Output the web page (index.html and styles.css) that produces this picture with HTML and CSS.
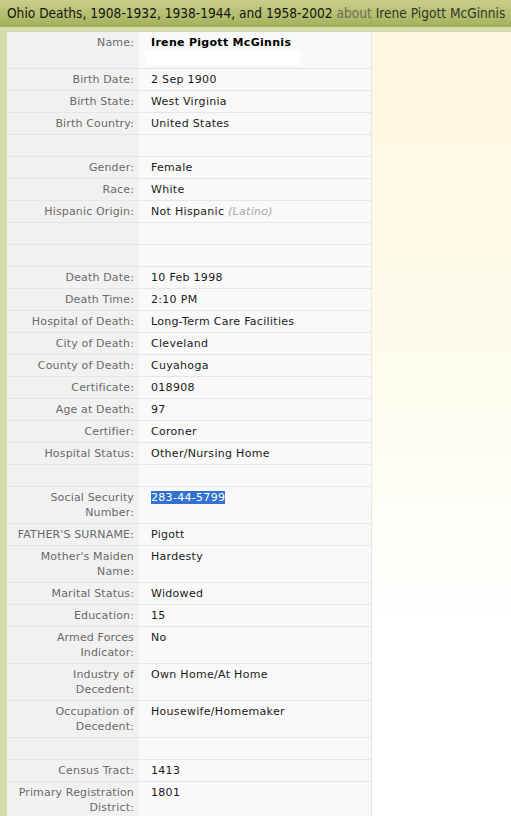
FILE: index.html
```html
<!DOCTYPE html>
<html>
<head>
<meta charset="utf-8">
<link rel="stylesheet" href="styles.css">
</head>
<body>
<div class="page">
  <h1 class="title">Ohio Deaths, 1908-1932, 1938-1944, and 1958-2002 <span class="about">about</span> <span class="who">Irene Pigott McGinnis</span></h1>
  <div class="frame">
    <div class="content">
      <div class="record">
        <div class="row name-row"><div class="lbl">Name:</div><div class="val"><b>Irene Pigott McGinnis</b><div class="blank"></div></div></div>
        <div class="row"><div class="lbl">Birth Date:</div><div class="val">2 Sep 1900</div></div>
        <div class="row"><div class="lbl">Birth State:</div><div class="val">West Virginia</div></div>
        <div class="row"><div class="lbl">Birth Country:</div><div class="val">United States</div></div>
        <div class="row"><div class="lbl">&nbsp;</div><div class="val">&nbsp;</div></div>
        <div class="row"><div class="lbl">Gender:</div><div class="val">Female</div></div>
        <div class="row"><div class="lbl">Race:</div><div class="val">White</div></div>
        <div class="row"><div class="lbl">Hispanic Origin:</div><div class="val">Not Hispanic <i class="note">(Latino)</i></div></div>
        <div class="row"><div class="lbl">&nbsp;</div><div class="val">&nbsp;</div></div>
        <div class="row"><div class="lbl">&nbsp;</div><div class="val">&nbsp;</div></div>
        <div class="row"><div class="lbl">Death Date:</div><div class="val">10 Feb 1998</div></div>
        <div class="row"><div class="lbl">Death Time:</div><div class="val">2:10 PM</div></div>
        <div class="row"><div class="lbl">Hospital of Death:</div><div class="val">Long-Term Care Facilities</div></div>
        <div class="row"><div class="lbl">City of Death:</div><div class="val">Cleveland</div></div>
        <div class="row"><div class="lbl">County of Death:</div><div class="val">Cuyahoga</div></div>
        <div class="row"><div class="lbl">Certificate:</div><div class="val">018908</div></div>
        <div class="row"><div class="lbl">Age at Death:</div><div class="val">97</div></div>
        <div class="row"><div class="lbl">Certifier:</div><div class="val">Coroner</div></div>
        <div class="row"><div class="lbl">Hospital Status:</div><div class="val">Other/Nursing Home</div></div>
        <div class="row"><div class="lbl">&nbsp;</div><div class="val">&nbsp;</div></div>
        <div class="row"><div class="lbl">Social Security<br>Number:</div><div class="val"><span class="sel">283-44-5799</span></div></div>
        <div class="row"><div class="lbl">FATHER'S SURNAME:</div><div class="val">Pigott</div></div>
        <div class="row"><div class="lbl">Mother's Maiden<br>Name:</div><div class="val">Hardesty</div></div>
        <div class="row"><div class="lbl">Marital Status:</div><div class="val">Widowed</div></div>
        <div class="row"><div class="lbl">Education:</div><div class="val">15</div></div>
        <div class="row"><div class="lbl">Armed Forces<br>Indicator:</div><div class="val">No</div></div>
        <div class="row"><div class="lbl">Industry of<br>Decedent:</div><div class="val">Own Home/At Home</div></div>
        <div class="row"><div class="lbl">Occupation of<br>Decedent:</div><div class="val">Housewife/Homemaker</div></div>
        <div class="row"><div class="lbl">&nbsp;</div><div class="val">&nbsp;</div></div>
        <div class="row"><div class="lbl">Census Tract:</div><div class="val">1413</div></div>
        <div class="row"><div class="lbl">Primary Registration<br>District:</div><div class="val">1801</div></div>
        <div class="row"><div class="lbl">&nbsp;</div><div class="val">&nbsp;</div></div>
      </div>
      <div class="aside"></div>
    </div>
  </div>
</div>
</body>
</html>
```
FILE: styles.css
```css
html, body {
  margin: 0;
  padding: 0;
  background: #ffffff;
}
.page {
  width: 511px;
  height: 816px;
  overflow: hidden;
}
.title {
  margin: 0;
  height: 27px;
  box-sizing: border-box;
  padding: 5px 0 0 7px;
  font-family: "DejaVu Sans Condensed", "DejaVu Sans", sans-serif;
  font-weight: normal;
  font-size: 13.6px;
  line-height: 17px;
  color: #16160e;
  white-space: nowrap;
  background: linear-gradient(to bottom, #c6ce8a 0%, #b4be70 55%, #a4b05c 100%);
}
.about {
  color: #6c6c56;
}
.who {
  color: #36362a;
}
.frame {
  background: #d5dcab;
  padding: 5px 0 0 7px;
}
.content {
  display: flex;
  align-items: flex-start;
}
.record {
  width: 364px;
  flex: none;
  font-family: "DejaVu Sans", Verdana, sans-serif;
  font-size: 11px;
  line-height: 15px;
  background: #f9f9f9;
  border-right: 1px solid #e8e8e8;
}
.row {
  display: flex;
  border-bottom: 1px solid #e6e6e6;
}
.lbl {
  width: 132px;
  flex: none;
  box-sizing: border-box;
  padding: 3px 5px 3px 0;
  text-align: right;
  letter-spacing: 0.15px;
  color: #6a6a6a;
  background: #f1f1f1;
}
.val {
  flex: 1;
  padding: 3px 0 3px 12px;
  letter-spacing: 0.3px;
  color: #1a1a1a;
}
.val b {
  color: #000;
}
.blank {
  width: 155px;
  height: 15px;
  margin-left: -6px;
  background: #ffffff;
}
.note {
  color: #a8a8a8;
}
.sel {
  background: #3471d0;
  color: #ffffff;
}
.aside {
  flex: 1;
  height: 790px;
  background: linear-gradient(to bottom, #fef7df 0%, #fffbec 40%, #ffffff 75%);
}
```
